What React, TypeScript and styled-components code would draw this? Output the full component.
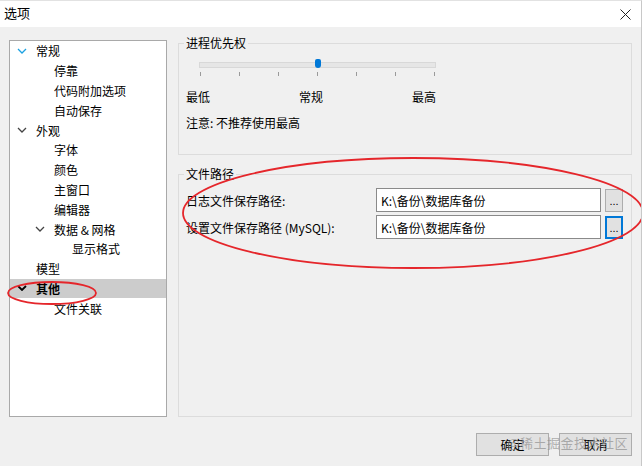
import styled, { createGlobalStyle } from 'styled-components'

const GlobalStyle = createGlobalStyle`
  html, body {
    margin: 0;
    padding: 0;
    background: #f0f0f0;
  }
  body {
    font-family: "Noto Sans CJK SC", "Liberation Sans", sans-serif;
    font-size: 12px;
    color: #000;
  }
`

const Window = styled.div`
  position: relative;
  width: 642px;
  height: 466px;
  box-sizing: border-box;
  border-right: 1px solid #c8c8c8;
  border-top: 1px solid #e2e2e2;
  background: #f0f0f0;
  display: flex;
  flex-direction: column;
  overflow: hidden;
`
const TitleBar = styled.div`
  height: 26px;
  box-sizing: border-box;
  background: #fff;
  display: flex;
  align-items: center;
  justify-content: space-between;
  padding: 0 10px 3px 4px;
  font-size: 13px;
`
const CloseButton = styled.span`
  display: flex;
  align-items: center;
  padding-top: 3px;
`
const Body = styled.div`
  display: flex;
  padding: 9px 9px 0 9px;
`
const Tree = styled.div`
  margin-top: 4px;
  width: 158px;
  height: 377px;
  box-sizing: border-box;
  background: #fff;
  border: 1px solid #a9a9a9;
  padding-top: 0;
`
const TreeRow = styled.div<{ $level: number; $selected?: boolean }>`
  height: 19.8px;
  display: flex;
  align-items: center;
  padding-left: ${p => 6 + p.$level * 18}px;
  background: ${p => (p.$selected ? '#cccccc' : 'transparent')};
  font-weight: ${p => (p.$selected ? 'bold' : 'normal')};
  white-space: pre;
`
const Chevron = styled.span`
  width: 12px;
  margin-right: 8px;
  display: flex;
  align-items: center;
  justify-content: center;
`
const RightColumn = styled.div`
  margin-left: 11px;
  width: 454px;
  display: flex;
  flex-direction: column;
  gap: 12px;
`
const Group = styled.fieldset<{ $height: number }>`
  margin: 0;
  padding: 0;
  height: ${p => p.$height}px;
  box-sizing: border-box;
  border: 1px solid #dcdcdc;
  min-width: 0;
`
const Legend = styled.legend`
  margin-left: 5px;
  padding: 0 2px;
  line-height: 14px;
  font-size: 12px;
`
const SliderArea = styled.div`
  margin: 12px 0 0 20px;
  width: 237px;
`
const Track = styled.div`
  position: relative;
  height: 4px;
  background: #e6e6e6;
  border: 1px solid #d8d8d8;
`
const Thumb = styled.div`
  position: absolute;
  top: -4px;
  width: 6px;
  height: 9px;
  margin-left: -3px;
  border-radius: 2px 2px 3px 3px;
  background: #0078d7;
`
const Ticks = styled.div`
  display: flex;
  justify-content: space-between;
  margin-top: 4px;
  padding: 0 1px;
`
const Tick = styled.span`
  width: 1px;
  height: 4px;
  background: #9a9a9a;
`
const LevelLabels = styled.div`
  display: flex;
  justify-content: space-between;
  margin: 12px 0 0 7px;
  width: 250px;
`
const Note = styled.div`
  margin: 9px 0 0 7px;
`
const PathRows = styled.div`
  display: flex;
  flex-direction: column;
  gap: 3px;
  padding: 7px 0 0 7px;
`
const PathRow = styled.div`
  display: flex;
  align-items: center;
`
const PathLabel = styled.span`
  width: 190px;
`
const PathInput = styled.div`
  width: 225px;
  height: 24px;
  box-sizing: border-box;
  border: 1px solid #8a8a8a;
  background: #fff;
  padding-left: 4px;
  display: flex;
  align-items: center;
`
const BrowseButton = styled.button<{ $focused?: boolean }>`
  margin-left: 4px;
  width: 18px;
  height: 23px;
  box-sizing: border-box;
  padding: 0 0 4px;
  border: 1px solid ${p => (p.$focused ? '#0078d7' : '#adadad')};
  box-shadow: ${p => (p.$focused ? 'inset 0 0 0 1px #0078d7' : 'none')};
  background: #e1e1e1;
  font: 11px "Liberation Sans", sans-serif;
  display: flex;
  align-items: flex-end;
  justify-content: center;
`
const Footer = styled.div`
  display: flex;
  justify-content: flex-end;
  gap: 10px;
  padding: 16px 9px 0 0;
`
const DialogButton = styled.button`
  width: 73px;
  height: 23px;
  box-sizing: border-box;
  border: 1px solid #adadad;
  background: #e1e1e1;
  font: 12px "Noto Sans CJK SC", sans-serif;
  color: #000;
  padding: 0;
`
const Annotations = styled.svg`
  position: absolute;
  left: 0;
  top: 0;
  pointer-events: none;
`
const Watermark = styled.span`
  position: absolute;
  right: 13px;
  top: 432px;
  font-size: 13px;
  color: rgba(150, 150, 150, 0.75);
  letter-spacing: 0.5px;
  pointer-events: none;
`

type Node = { label: string; level: number; expand?: boolean; hover?: boolean; selected?: boolean }

const nodes: Node[] = [
  { label: '常规', level: 0, expand: true, hover: true },
  { label: '停靠', level: 1 },
  { label: '代码附加选项', level: 1 },
  { label: '自动保存', level: 1 },
  { label: '外观', level: 0, expand: true },
  { label: '字体', level: 1 },
  { label: '颜色', level: 1 },
  { label: '主窗口', level: 1 },
  { label: '编辑器', level: 1 },
  { label: '数据 & 网格', level: 1, expand: true },
  { label: '显示格式', level: 2 },
  { label: '模型', level: 0 },
  { label: '其他', level: 0, expand: true, selected: true },
  { label: '文件关联', level: 1 },
]

function ChevronIcon({ color, bold }: { color: string; bold?: boolean }) {
  return (
    <svg width="10" height="6" viewBox="0 0 10 6">
      <polyline points="1,1 5,5 9,1" fill="none" stroke={color} strokeWidth={bold ? 1.8 : 1.3} />
    </svg>
  )
}

const paths = [
  { label: '日志文件保存路径:', value: 'K:\\备份\\数据库备份' },
  { label: '设置文件保存路径 (MySQL):', value: 'K:\\备份\\数据库备份', focused: true },
]

const priority = 3
const tickCount = 7

export default function App() {
  return (
    <Window>
      <GlobalStyle />
      <TitleBar>
        <span>选项</span>
        <CloseButton>
          <svg width="11" height="11" viewBox="0 0 11 11">
            <path d="M0.5 0.5 L10.5 10.5 M10.5 0.5 L0.5 10.5" stroke="#222" strokeWidth="1" />
          </svg>
        </CloseButton>
      </TitleBar>
      <Body>
        <Tree>
          {nodes.map(n => (
            <TreeRow key={n.label} $level={n.level} $selected={n.selected}>
              <Chevron>
                {n.expand && (
                  <ChevronIcon color={n.hover ? '#1ba1e2' : n.selected ? '#000' : '#444'} bold={n.selected} />
                )}
              </Chevron>
              {n.label}
            </TreeRow>
          ))}
        </Tree>
        <RightColumn>
          <Group $height={119}>
            <Legend>进程优先权</Legend>
            <SliderArea>
              <Track>
                <Thumb style={{ left: `${(priority / (tickCount - 1)) * 100}%` }} />
              </Track>
              <Ticks>
                {Array.from({ length: tickCount }).map((_, i) => (
                  <Tick key={i} />
                ))}
              </Ticks>
            </SliderArea>
            <LevelLabels>
              <span>最低</span>
              <span>常规</span>
              <span>最高</span>
            </LevelLabels>
            <Note>注意: 不推荐使用最高</Note>
          </Group>
          <Group $height={250}>
            <Legend>文件路径</Legend>
            <PathRows>
              {paths.map(p => (
                <PathRow key={p.label}>
                  <PathLabel>{p.label}</PathLabel>
                  <PathInput>{p.value}</PathInput>
                  <BrowseButton $focused={p.focused}>...</BrowseButton>
                </PathRow>
              ))}
            </PathRows>
          </Group>
        </RightColumn>
      </Body>
      <Footer>
        <DialogButton>确定</DialogButton>
        <DialogButton>取消</DialogButton>
      </Footer>
      <Watermark>@稀土掘金技术社区</Watermark>
      <Annotations width="642" height="466">
        <ellipse cx="413" cy="212" rx="230" ry="55" fill="none" stroke="#e5262b" strokeWidth="1.8" />
        <ellipse cx="52" cy="292" rx="44" ry="11" fill="none" stroke="#e5262b" strokeWidth="1.8" />
      </Annotations>
    </Window>
  )
}
